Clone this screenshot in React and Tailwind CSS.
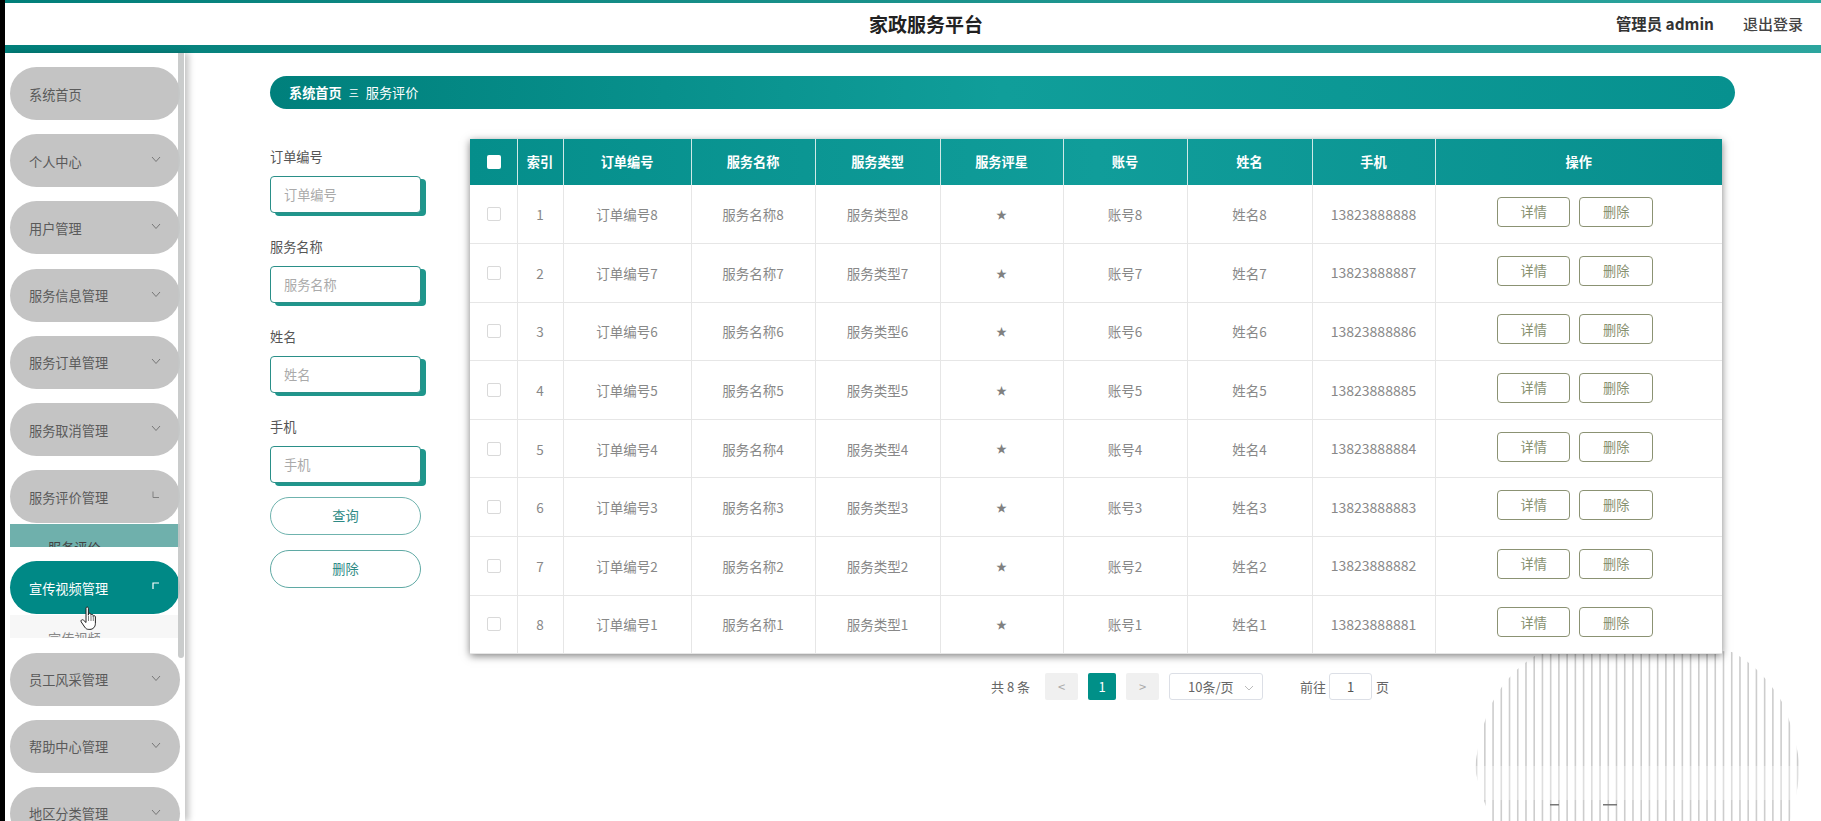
import React from "react";

const font = { fontFamily: '"Noto Sans CJK SC", "Liberation Sans", sans-serif' };

const rows = [8, 7, 6, 5, 4, 3, 2, 1];
const widths = [47, 46, 128, 124, 125, 123, 124, 125, 123, 287];
const heads = ["索引", "订单编号", "服务名称", "服务类型", "服务评星", "账号", "姓名", "手机", "操作"];

function Chevron({ kind }) {
  if (kind === "l")
    return (
      <svg width="10" height="10" viewBox="0 0 10 10" fill="none" stroke="#808080" strokeWidth="1" className="absolute right-[19px] top-[20px]">
        <path d="M2 1.5V7.5H8" />
      </svg>
    );
  if (kind === "g")
    return (
      <svg width="10" height="10" viewBox="0 0 10 10" fill="none" stroke="#fff" strokeWidth="1.2" className="absolute right-[19px] top-[20px]">
        <path d="M2 8V2H8" />
      </svg>
    );
  return (
    <svg width="10" height="7" viewBox="0 0 10 7" fill="none" stroke="#777" strokeWidth="1" className="absolute right-[19px] top-[22px]">
      <path d="M1 1L5 5.5L9 1" />
    </svg>
  );
}

function MenuItem({ label, arrow = "v", active = false, sub, subActive = false }) {
  return (
    <div className="mb-[14.2px] w-[170px]">
      <div className={`relative flex h-[53px] items-center rounded-full pl-[19px] pt-[2px] text-[13.2px] ${active ? "bg-[#008986] text-white" : "bg-[#c4c4c4] text-[#5a5a5a]"}`}>
        {label}
        {arrow && <Chevron kind={arrow} />}
      </div>
      {sub && (
        <div className={`mt-[1px] h-[23px] overflow-hidden pl-[38px] pt-[14px] text-[13.2px] leading-[20px] ${subActive ? "bg-[#6fb0ac] text-[#444]" : "bg-[#f7f7f7] text-[#888]"}`}>
          {sub}
        </div>
      )}
    </div>
  );
}

function Field({ label }) {
  return (
    <div>
      <div className="mb-[9px] h-5 text-[13.2px] leading-5 text-[#555]">{label}</div>
      <div className="flex h-[37px] w-[151px] items-center rounded-[4px] border border-[#2a8f88] bg-white pl-[13px] text-[13.2px] text-[#aaa] shadow-[5px_3px_0_#1f968c]">
        {label}
      </div>
    </div>
  );
}

function Hand() {
  return (
    <svg width="20" height="25" viewBox="0 0 20 25" className="absolute left-[75px] top-[553px] z-20">
      <path
        d="M6 2.2c0-1.6 2.4-1.6 2.4 0v7l.1-1c.2-1.4 2.3-1.3 2.4.1v1c.2-1.3 2.2-1.2 2.3.2v1c.3-1.2 2.2-1 2.2.4v6.5c0 3.5-2.4 6-5.5 6H8.800c-1.900 0-3-.8-4-2.200L1.200 15.900c-1-1.500 1-3 2.300-1.700L6 16.500z"
        fill="#fff"
        stroke="#222"
        strokeWidth="1"
        strokeLinejoin="round"
      />
      <path d="M8.500 10v5M11 10v5M13.300 11v4" stroke="#444" strokeWidth=".7" fill="none" />
    </svg>
  );
}

function Stripes() {
  const xs = Array.from({ length: 40 }, (_, i) => 5.8 + i * 8.23);
  return (
    <svg width="340" height="181" viewBox="0 0 340 181" className="absolute left-[1470px] top-[640px] z-0">
      <defs>
        <clipPath id="blob">
          <path d="M5 127C8 105 12 85 22 63C32 44 48 24 75 10C100 8 240 8 262 12C285 24 300 42 312 62C322 85 327 105 330 127C328 145 326 160 320 181H22C13 160 8 145 5 127Z" />
        </clipPath>
      </defs>
      <g clipPath="url(#blob)">
        {xs.map((x) => (
          <rect key={x} x={x} y="0" width="1.6" height="181" fill="#cdcdcd" />
        ))}
        <rect x="0" y="126" width="340" height="34" fill="#ffffff" fillOpacity="0.35" />
      </g>
      <rect x="80" y="164" width="9" height="1.500" fill="#777" />
      <rect x="133" y="164" width="14" height="1.500" fill="#777" />
    </svg>
  );
}

function Pagination() {
  return (
    <div className="ml-[521px] mt-[19px] flex h-[27px] items-center text-[13px] text-[#666]">
      <span className="w-[54px]">共 8 条</span>
      <div className="flex h-[27px] w-[33px] items-center justify-center rounded-[2px] bg-[#f0f0f0] text-[#aaa]">&lt;</div>
      <div className="ml-[10px] flex h-[27px] w-[28px] items-center justify-center rounded-[2px] bg-[#009088] text-white">1</div>
      <div className="ml-[10px] flex h-[27px] w-[33px] items-center justify-center rounded-[2px] bg-[#f0f0f0] text-[#aaa]">&gt;</div>
      <div className="relative ml-[10px] flex h-[27px] w-[94px] items-center rounded-[3px] border border-[#dcdfe6] pl-[18px] text-[#666]">
        10条/页
        <svg width="10" height="6" viewBox="0 0 10 6" fill="none" stroke="#bbb" strokeWidth="1" className="absolute right-[8px] top-[11px]">
          <path d="M1 1L5 5L9 1" />
        </svg>
      </div>
      <span className="ml-[37px]">前往</span>
      <div className="ml-[3px] flex h-[27px] w-[43px] items-center justify-center rounded-[3px] border border-[#dcdfe6] text-[#555]">1</div>
      <span className="ml-[4px]">页</span>
    </div>
  );
}

function DataTable() {
  return (
    <table className="relative z-10 table-fixed w-[1252px] border-collapse bg-white text-center text-[13.5px] shadow-[0_2px_8px_rgba(0,0,0,0.5)]">
      <colgroup>
        {widths.map((w, i) => (
          <col key={i} style={{ width: w }} />
        ))}
      </colgroup>
      <thead>
        <tr className="h-[46px] bg-gradient-to-r from-[#058e8b] via-[#109d9a] to-[#088f8e] text-[13.2px] text-white">
          <th className="border-r border-[#cfe9e7] p-0">
            <span className="block h-[14px] w-[14px] ml-[17px] rounded-[2px] bg-white" />
          </th>
          {heads.map((h, i) => (
            <th key={h} className={`p-0 font-bold ${i < heads.length - 1 ? "border-r border-[#cfe9e7]" : ""}`}>
              {h}
            </th>
          ))}
        </tr>
      </thead>
      <tbody className="text-[#888]">
        {rows.map((n, i) => (
          <tr key={n} className="h-[58.6px] border-b border-[#e6e6e6]">
            <td className="border-r border-[#e6e6e6] p-0">
              <span className="block h-[14px] w-[14px] ml-[17px] rounded-[2px] border border-[#d9d9d9] bg-white" />
            </td>
            <td className="border-r border-[#e6e6e6] p-0">{i + 1}</td>
            <td className="border-r border-[#e6e6e6] p-0">订单编号{n}</td>
            <td className="border-r border-[#e6e6e6] p-0">服务名称{n}</td>
            <td className="border-r border-[#e6e6e6] p-0">服务类型{n}</td>
            <td className="border-r border-[#e6e6e6] p-0 text-[11px] text-[#808080]">★</td>
            <td className="border-r border-[#e6e6e6] p-0">账号{n}</td>
            <td className="border-r border-[#e6e6e6] p-0">姓名{n}</td>
            <td className="border-r border-[#e6e6e6] p-0 text-[14px]">1382388888{n}</td>
            <td className="p-0 text-[13.2px]">
              <div className="mb-[4px] flex justify-center gap-[9px] pr-[7px]">
                <span className="flex h-[30px] w-[73px] items-center justify-center rounded-[4px] border border-[#8b9273] text-[#87906f]">详情</span>
                <span className="flex h-[30px] w-[74px] items-center justify-center rounded-[4px] border border-[#8b9273] text-[#87906f]">删除</span>
              </div>
            </td>
          </tr>
        ))}
      </tbody>
    </table>
  );
}

export default function App() {
  return (
    <div className="relative flex h-[821px] w-[1821px] overflow-hidden bg-white" style={font}>
      <div className="w-[5px] shrink-0 bg-black" />
      <div className="flex min-w-0 flex-1 flex-col">
        <header className="shrink-0">
          <div className="h-[3px] bg-gradient-to-r from-[#017f7a] to-[#2ca59e]" />
          <div className="relative flex h-[42px] items-center justify-end bg-white pr-[18px] text-[#333]">
            <div className="absolute left-[864px] text-[19px] font-bold text-[#222]">家政服务平台</div>
            <span className="mr-[29px] text-[15.4px] font-bold">管理员 admin</span>
            <span className="text-[15px] font-medium text-[#444]">退出登录</span>
          </div>
          <div className="h-[8px] bg-gradient-to-r from-[#017f7a] to-[#2ca59e]" />
        </header>
        <div className="flex min-h-0 flex-1">
          <aside className="relative z-10 w-[180px] shrink-0 bg-white pl-[5px] pt-[14px] shadow-[4px_0_6px_rgba(0,0,0,0.22)]">
            <MenuItem label="系统首页" arrow={null} />
            <MenuItem label="个人中心" />
            <MenuItem label="用户管理" />
            <MenuItem label="服务信息管理" />
            <MenuItem label="服务订单管理" />
            <MenuItem label="服务取消管理" />
            <MenuItem label="服务评价管理" arrow="l" sub="服务评价" subActive />
            <MenuItem label="宣传视频管理" arrow="g" active sub="宣传视频" />
            <MenuItem label="员工风采管理" />
            <MenuItem label="帮助中心管理" />
            <MenuItem label="地区分类管理" />
            <div className="absolute left-[173px] top-0 h-[605px] w-[6px] rounded-b-[3px] bg-[#c4c6c7]/90" />
            <Hand />
          </aside>
          <main className="min-w-0 flex-1 pl-[85px] pt-[23px]">
            <div className="flex h-[33px] w-[1465px] items-center rounded-full bg-gradient-to-r from-[#00807c] via-[#109e9a] to-[#07918f] pl-[19px] text-[13.2px] text-white">
              <span className="font-bold">系统首页</span>
              <span className="mx-[7px] text-[10px] leading-none">三</span>
              <span>服务评价</span>
            </div>
            <div className="flex">
              <div className="flex w-[200px] shrink-0 flex-col pt-[38px]">
                <div className="flex flex-col gap-[24px]">
                  <Field label="订单编号" />
                  <Field label="服务名称" />
                  <Field label="姓名" />
                  <Field label="手机" />
                </div>
                <div className="mt-[14px] flex h-[38px] w-[151px] items-center justify-center rounded-full border border-[#6fb3ae] text-[13.2px] text-[#2e8a85]">查询</div>
                <div className="mt-[15px] flex h-[38px] w-[151px] items-center justify-center rounded-full border border-[#5fa9a4] text-[13.2px] text-[#2e8a85]">删除</div>
              </div>
              <div className="pt-[30px]">
                <DataTable />
                <Pagination />
              </div>
            </div>
          </main>
        </div>
      </div>
      <Stripes />
    </div>
  );
}
